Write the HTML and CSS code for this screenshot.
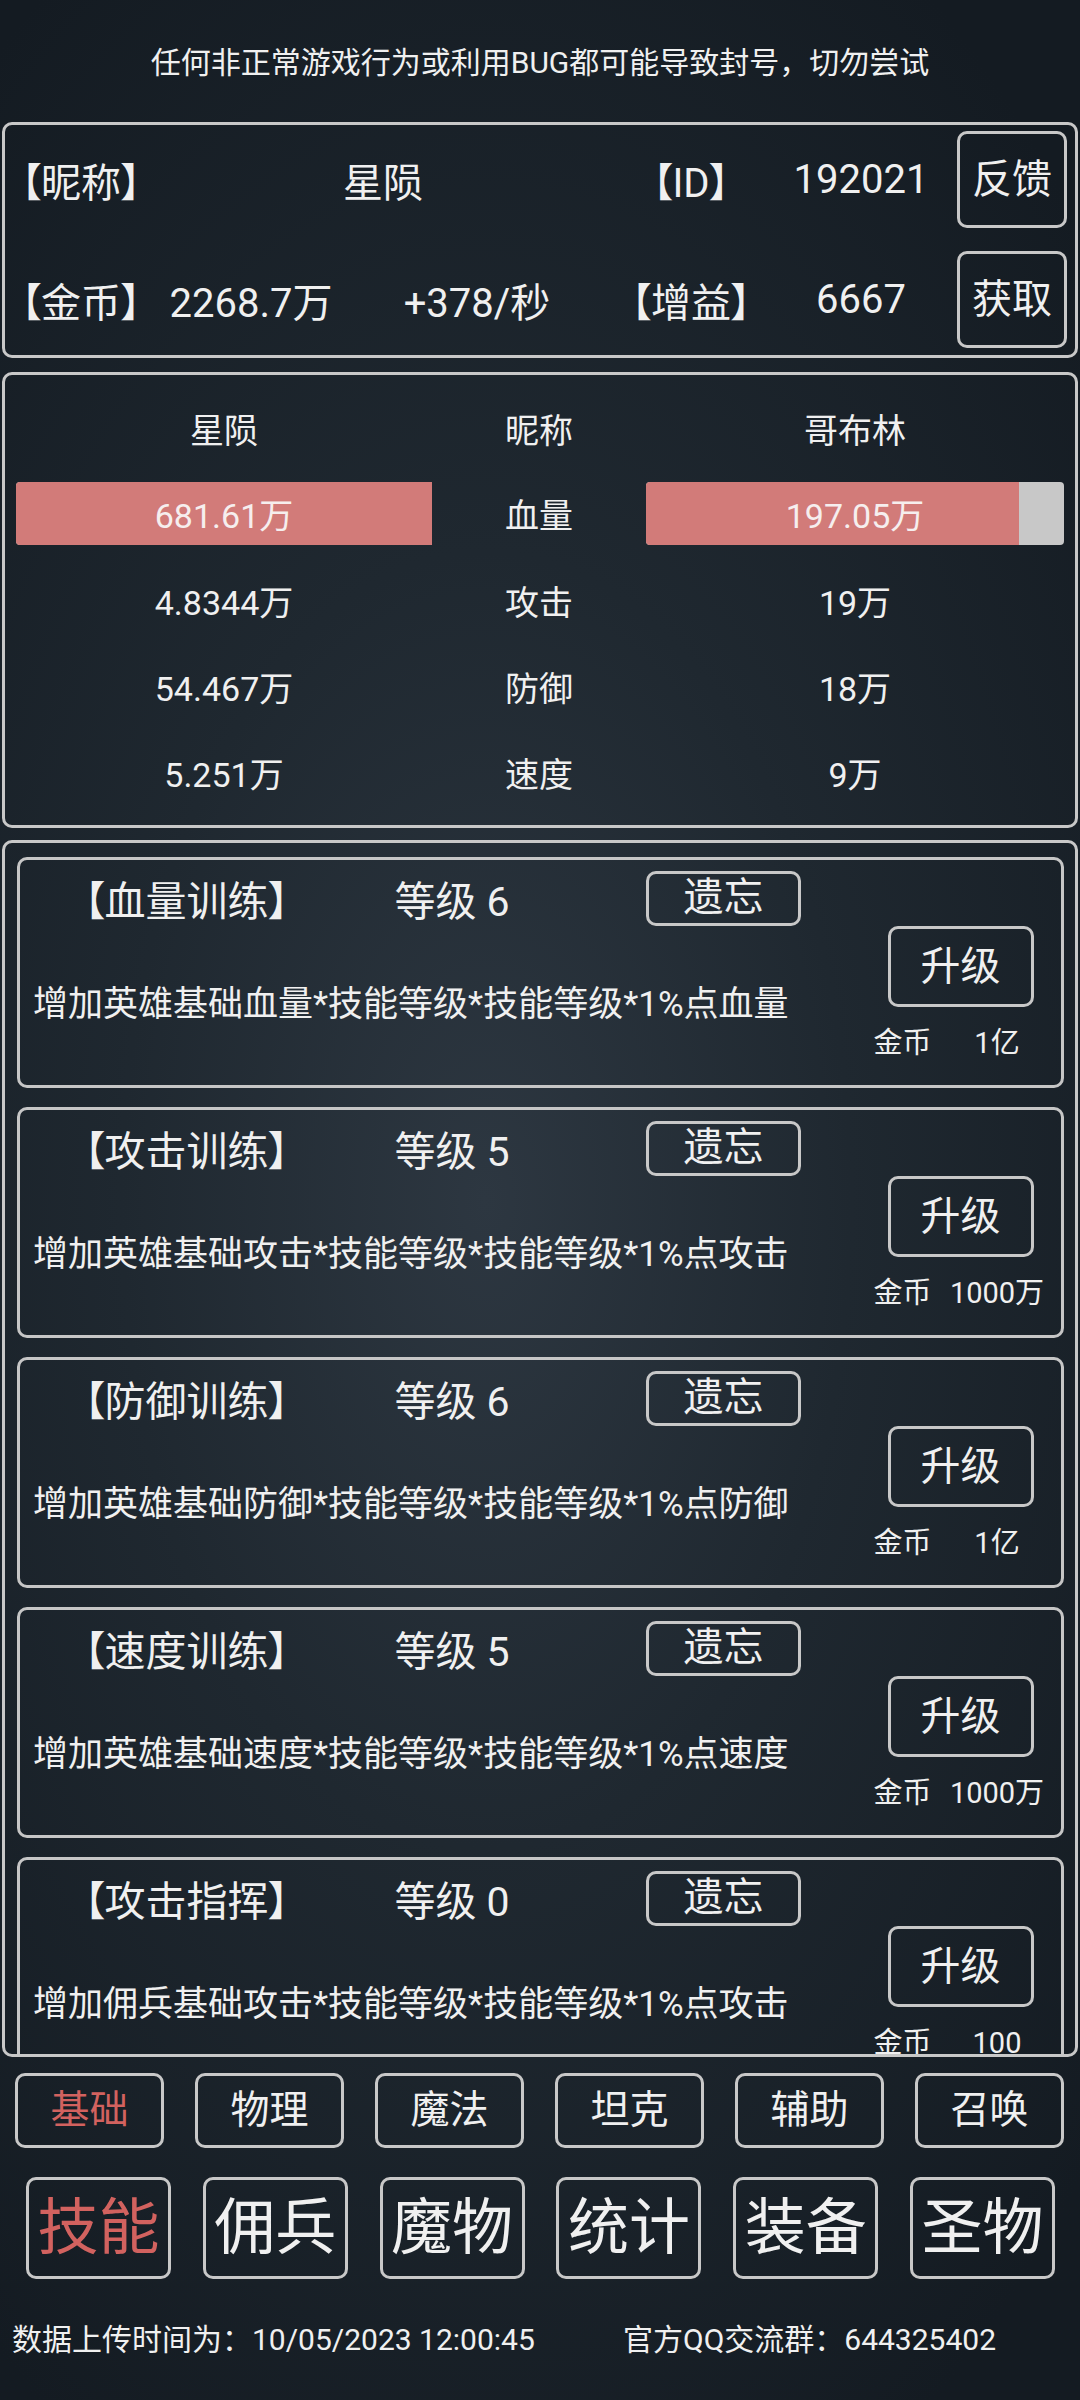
FILE: index.html
```html
<!DOCTYPE html>
<html lang="zh-CN">
<head>
    <meta charset="UTF-8">
    <meta name="viewport" content="width=device-width, initial-scale=1.0">
    <title>技能</title>
    <link rel="stylesheet" href="styles.css">
</head>
<body>
    <p class="notice">任何非正常游戏行为或利用BUG都可能导致封号，切勿尝试</p>

    <section class="panel info">
        <span class="label">【昵称】</span>
        <span class="val wide">星陨</span>
        <span class="label">【ID】</span>
        <span class="val">192021</span>
        <button class="btn side-btn">反馈</button>
        <span class="label">【金币】</span>
        <span class="val">2268.7万</span>
        <span class="val">+378/秒</span>
        <span class="label">【增益】</span>
        <span class="val">6667</span>
        <button class="btn side-btn">获取</button>
    </section>

    <section class="panel battle">
        <div class="row head">
            <span>星陨</span><span>昵称</span><span>哥布林</span>
        </div>
        <div class="row hp">
            <div class="bar"><div class="fill" style="width: 100%"></div><span>681.61万</span></div>
            <span>血量</span>
            <div class="bar"><div class="fill" style="width: 89.2%"></div><span>197.05万</span></div>
        </div>
        <div class="row">
            <span>4.8344万</span><span>攻击</span><span>19万</span>
        </div>
        <div class="row">
            <span>54.467万</span><span>防御</span><span>18万</span>
        </div>
        <div class="row">
            <span>5.251万</span><span>速度</span><span>9万</span>
        </div>
    </section>

    <section class="panel skills">
        <div class="skill">
            <div class="skill-main">
                <div class="skill-head">
                    <span class="skill-name">【血量训练】</span>
                    <span class="skill-level">等级 6</span>
                    <button class="btn forget">遗忘</button>
                </div>
                <p class="skill-desc">增加英雄基础血量*技能等级*技能等级*1%点血量</p>
            </div>
            <div class="skill-side">
                <button class="btn upgrade">升级</button>
                <div class="cost"><span>金币</span><span>1亿</span></div>
            </div>
        </div>
        <div class="skill">
            <div class="skill-main">
                <div class="skill-head">
                    <span class="skill-name">【攻击训练】</span>
                    <span class="skill-level">等级 5</span>
                    <button class="btn forget">遗忘</button>
                </div>
                <p class="skill-desc">增加英雄基础攻击*技能等级*技能等级*1%点攻击</p>
            </div>
            <div class="skill-side">
                <button class="btn upgrade">升级</button>
                <div class="cost"><span>金币</span><span>1000万</span></div>
            </div>
        </div>
        <div class="skill">
            <div class="skill-main">
                <div class="skill-head">
                    <span class="skill-name">【防御训练】</span>
                    <span class="skill-level">等级 6</span>
                    <button class="btn forget">遗忘</button>
                </div>
                <p class="skill-desc">增加英雄基础防御*技能等级*技能等级*1%点防御</p>
            </div>
            <div class="skill-side">
                <button class="btn upgrade">升级</button>
                <div class="cost"><span>金币</span><span>1亿</span></div>
            </div>
        </div>
        <div class="skill">
            <div class="skill-main">
                <div class="skill-head">
                    <span class="skill-name">【速度训练】</span>
                    <span class="skill-level">等级 5</span>
                    <button class="btn forget">遗忘</button>
                </div>
                <p class="skill-desc">增加英雄基础速度*技能等级*技能等级*1%点速度</p>
            </div>
            <div class="skill-side">
                <button class="btn upgrade">升级</button>
                <div class="cost"><span>金币</span><span>1000万</span></div>
            </div>
        </div>
        <div class="skill">
            <div class="skill-main">
                <div class="skill-head">
                    <span class="skill-name">【攻击指挥】</span>
                    <span class="skill-level">等级 0</span>
                    <button class="btn forget">遗忘</button>
                </div>
                <p class="skill-desc">增加佣兵基础攻击*技能等级*技能等级*1%点攻击</p>
            </div>
            <div class="skill-side">
                <button class="btn upgrade">升级</button>
                <div class="cost"><span>金币</span><span>100</span></div>
            </div>
        </div>
    </section>

    <nav class="tabs sub-tabs">
        <button class="btn active">基础</button>
        <button class="btn">物理</button>
        <button class="btn">魔法</button>
        <button class="btn">坦克</button>
        <button class="btn">辅助</button>
        <button class="btn">召唤</button>
    </nav>

    <nav class="tabs main-tabs">
        <button class="btn active">技能</button>
        <button class="btn">佣兵</button>
        <button class="btn">魔物</button>
        <button class="btn">统计</button>
        <button class="btn">装备</button>
        <button class="btn">圣物</button>
    </nav>

    <footer class="footer">
        <span>数据上传时间为：10/05/2023 12:00:45</span>
        <span>官方QQ交流群：644325402</span>
    </footer>
</body>
</html>
```

FILE: styles.css
```css
* {
    box-sizing: border-box;
}
html {
    background: #141b22;
}
body {
    margin: 0;
    width: 1080px;
    height: 2400px;
    overflow: hidden;
    font-family: Roboto, "Noto Sans CJK SC", sans-serif;
    color: #f0f0f0;
    background: radial-gradient(ellipse 75% 60% at 45% 50%, #2d3741 0%, #1f2830 45%, #141b22 100%);
}
.btn {
    background: transparent;
    border: 3px solid #c8c8c8;
    border-radius: 10px;
    color: #f0f0f0;
    font-family: inherit;
    line-height: 1;
    padding: 0;
    cursor: pointer;
}
.notice {
    margin: 0;
    height: 122px;
    padding-bottom: 2px;
    display: flex;
    justify-content: center;
    align-items: center;
    font-size: 30px;
}
.panel {
    margin: 0 2px;
    border: 3px solid #c8c8c8;
    border-radius: 10px;
}

/* player info */
.info {
    height: 236px;
    display: grid;
    grid-template-columns: 152px 188px 264px 164px 176px 118px;
    grid-template-rows: 97px 97px;
    row-gap: 23px;
    padding: 6px 8px 7px 0;
    align-items: center;
    text-align: center;
    font-size: 40px;
}
.info .label {
    font-feature-settings: "palt";
}
.info .wide {
    grid-column: span 2;
}
.side-btn {
    justify-self: end;
    width: 110px;
    height: 97px;
    font-size: 40px;
}

/* battle compare */
.battle {
    margin-top: 14px;
    height: 456px;
    padding: 12px 11px 0;
    font-size: 34px;
}
.battle .row {
    display: grid;
    grid-template-columns: 416px 214px 418px;
    height: 86px;
    align-items: center;
    text-align: center;
}
.battle .head {
    height: 82px;
}
.battle .hp {
    height: 88px;
}
.bar {
    position: relative;
    height: 63px;
    background: #c8c8c8;
    border-radius: 4px;
    display: flex;
    align-items: center;
    justify-content: center;
    color: #f6eeee;
}
.bar .fill {
    position: absolute;
    left: 0;
    top: 0;
    bottom: 0;
    background: #d27b79;
    border-radius: 4px 0 0 4px;
}
.bar span {
    position: relative;
}

/* skill list */
.skills {
    margin-top: 12px;
    height: 1217px;
    overflow: hidden;
    padding: 14px 11px 0 12px;
}
.skill {
    height: 231px;
    border: 3px solid #c6c6c6;
    border-radius: 10px;
    margin-bottom: 19px;
    display: grid;
    grid-template-columns: 840px 201px;
}
.skill-head {
    display: grid;
    grid-template-columns: 333px 198px 95px 155px;
    align-items: center;
    height: 55px;
    margin-top: 8px;
    font-size: 41px;
    text-align: center;
}
.skill-name {
    font-feature-settings: "palt";
}
.forget {
    grid-column: 4;
    width: 155px;
    height: 55px;
    font-size: 40px;
}
.skill-desc {
    margin: 57px 0 0 13px;
    height: 50px;
    line-height: 50px;
    font-size: 35px;
    white-space: nowrap;
}
.skill-side {
    display: flex;
    flex-direction: column;
    align-items: center;
}
.upgrade {
    margin-top: 66px;
    width: 146px;
    height: 81px;
    font-size: 40px;
}
.cost {
    margin-top: 16px;
    width: 100%;
    display: grid;
    grid-template-columns: 85px 104px;
    height: 40px;
    line-height: 40px;
    font-size: 29px;
    text-align: center;
}

/* tabs */
.tabs {
    display: flex;
}
.tabs .btn.active {
    color: #d2625f;
}
.sub-tabs {
    margin-top: 16px;
    padding-left: 15px;
    gap: 31px;
}
.sub-tabs .btn {
    width: 149px;
    height: 75px;
    font-size: 39px;
}
.main-tabs {
    margin-top: 29px;
    padding-left: 26px;
    gap: 31.8px;
}
.main-tabs .btn {
    width: 145px;
    height: 102px;
    font-size: 61px;
}

.footer {
    margin-top: 41px;
    padding-left: 12px;
    display: grid;
    grid-template-columns: 611px auto;
    height: 40px;
    line-height: 40px;
    font-size: 30px;
}
```
